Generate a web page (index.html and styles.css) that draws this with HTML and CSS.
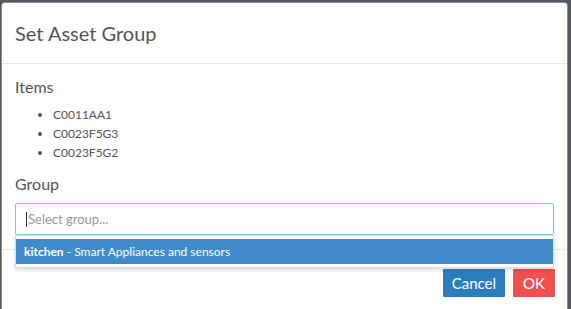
FILE: index.html
```html
<!DOCTYPE html>
<html lang="en">
<head>
    <meta charset="UTF-8">
    <meta name="viewport" content="width=device-width, initial-scale=1.0">
    <title>Set Asset Group</title>
    <link rel="stylesheet" href="styles.css">
</head>
<body>
    <div class="modal">
        <div class="modal-header">
            <h3>Set Asset Group</h3>
        </div>
        <div class="modal-body">
            <h4>Items</h4>
            <ul class="item-list">
                <li>C0011AA1</li>
                <li>C0023F5G3</li>
                <li>C0023F5G2</li>
            </ul>
            <h4>Group</h4>
            <div class="select-wrap">
                <div class="select-input">
                    <span class="caret"></span><span class="placeholder">Select group...</span>
                </div>
                <ul class="select-menu">
                    <li class="active"><strong>kitchen</strong> - Smart Appliances and sensors</li>
                </ul>
            </div>
        </div>
        <div class="modal-footer">
            <button class="btn btn-cancel">Cancel</button>
            <button class="btn btn-ok">OK</button>
        </div>
    </div>
</body>
</html>
```

FILE: styles.css
```css
body {
    margin: 0;
    padding: 0;
    background: #54585e;
    font-family: Lato, "Open Sans", sans-serif;
    color: #555;
    overflow: hidden;
}
.modal {
    margin: 2px 0 0 1px;
    width: 567px;
    height: 307px;
    box-sizing: border-box;
    background: #fff;
    border: 1px solid #8a8d91;
    border-bottom: none;
    border-radius: 4px 4px 0 0;
}
.modal-header {
    padding: 14px 13px;
    border-bottom: 1px solid #e5e5e5;
}
.modal-header h3 {
    margin: 0;
    font-size: 20px;
    font-weight: normal;
    line-height: 32px;
    color: #555;
}
.modal-body {
    padding: 13px 13px 14px;
}
h4 {
    margin: 0;
    font-size: 16px;
    font-weight: normal;
    line-height: 20px;
    color: #555;
}
.item-list {
    margin: 8px 0 12px;
    padding-left: 38px;
    font-size: 12px;
    line-height: 19px;
}
.select-wrap {
    position: relative;
    margin-top: 9px;
}
.select-input {
    height: 32px;
    box-sizing: border-box;
    border: 1px solid #6fcde6;
    border-radius: 2px;
    padding: 0 10px;
    display: flex;
    align-items: center;
    font-size: 13px;
}
.caret {
    width: 1px;
    height: 15px;
    background: #333;
    margin-right: 1px;
}
.placeholder {
    color: #999;
}
.select-menu {
    position: absolute;
    top: 32px;
    left: 0;
    right: 0;
    margin: 0;
    padding: 3px 0 3px;
    list-style: none;
    background: #fff;
    border: 1px solid #ddd;
    box-shadow: 0 2px 4px rgba(0, 0, 0, 0.15);
    font-size: 12px;
}
.select-menu li {
    padding: 0 8px;
    line-height: 25px;
}
.select-menu .active {
    background: #428bca;
    color: #fff;
}
.modal-footer {
    padding: 19px 12px;
    border-top: 1px solid #e5e5e5;
    display: flex;
    justify-content: flex-end;
    gap: 8px;
}
.btn {
    border: none;
    border-radius: 1px;
    color: #fff;
    font-family: inherit;
    font-size: 15px;
    height: 28px;
    padding: 0 9px;
}
.btn-cancel {
    background: #2a7dbf;
}
.btn-ok {
    background: #ee5050;
    padding: 0 10px;
}
```
